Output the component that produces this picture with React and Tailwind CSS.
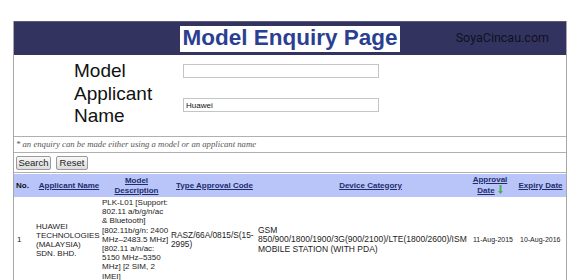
import React from 'react';

const cols = [22, 66, 69, 87, 211, 46, 51];

function SortArrow() {
  return (
    <svg width="5" height="9" viewBox="0 0 5 9" className="inline-block ml-[3px] align-[-1px]">
      <path d="M1.5 0h2v6h1.5L2.5 9 0 6h1.5z" fill="#4caf50" />
    </svg>
  );
}

function HeadLink({ children }) {
  return <span className="underline text-[#1f2d6d]">{children}</span>;
}

export default function App() {
  return (
    <div className="w-[580px] h-[280px] overflow-hidden bg-white text-[#111] font-['Liberation_Sans',Arial,sans-serif]">
      <div className="ml-[13px] mt-[21px] w-[554px] border-x border-[#a8a8a8]">
        <header className="h-[34px] bg-[#33335f] flex items-center border-t border-[#5a5a7a]">
          <div className="ml-[166px] w-[220px] h-[26px] bg-white flex items-center justify-center text-[22.5px] font-bold leading-none text-[#2b3f92]">
            Model Enquiry Page
          </div>
          <span className="ml-auto mr-[17px] text-[12.5px] font-['Roboto',sans-serif] text-black/70">SoyaCincau.com</span>
        </header>

        <div className="pt-[5px] pb-[9px] border-b border-[#b0b0b0] flex flex-col gap-[1px]">
          <div className="flex items-center">
            <div className="w-[169px] pl-[60px] text-[19px] leading-[22px]">Model</div>
            <input
              className="w-[196px] h-[14px] border border-[#c4c4c4] bg-white px-[2px] text-[8px] outline-none"
              defaultValue=""
            />
          </div>
          <div className="flex items-center">
            <div className="w-[169px] pl-[60px] text-[19px] leading-[22px]">
              Applicant
              <br />
              Name
            </div>
            <input
              className="w-[196px] h-[14px] border border-[#c4c4c4] bg-white px-[2px] text-[8px] outline-none"
              defaultValue="Huawei"
            />
          </div>
        </div>

        <div className="h-[16px] border-b border-[#b0b0b0] flex items-center pl-[2px] text-[8.7px] italic text-[#555] font-['Liberation_Serif',serif]">
          * an enquiry can be made either using a model or an applicant name
        </div>

        <div className="h-[20px] border-b border-[#b0b0b0] flex items-center gap-[5px] pl-[2px]">
          <button className="w-[35px] h-[14px] border border-[#9a9a9a] rounded-[2px] bg-gradient-to-b from-[#f8f8f8] to-[#dcdcdc] text-[9.5px] leading-none text-[#222]">
            Search
          </button>
          <button className="w-[32px] h-[14px] border border-[#9a9a9a] rounded-[2px] bg-gradient-to-b from-[#f8f8f8] to-[#dcdcdc] text-[9.5px] leading-none text-[#222]">
            Reset
          </button>
        </div>

        <table className="mt-[1px] w-full table-fixed border-collapse text-[8px]">
          <colgroup>
            {cols.map((w, i) => (
              <col key={i} style={{ width: w }} />
            ))}
          </colgroup>
          <thead>
            <tr className="h-[23px] bg-[#b9c4f9] font-bold leading-[10px] align-middle">
              <th className="text-left pl-[2px]">No.</th>
              <th className="text-center"><HeadLink>Applicant Name</HeadLink></th>
              <th className="text-center"><HeadLink>Model<br />Description</HeadLink></th>
              <th className="text-center"><HeadLink>Type Approval Code</HeadLink></th>
              <th className="text-center pl-[14px]"><HeadLink>Device Category</HeadLink></th>
              <th className="text-center pr-[4px]">
                <HeadLink>Approval</HeadLink>
                <br />
                <HeadLink>Date</HeadLink>
                <SortArrow />
              </th>
              <th className="text-center whitespace-nowrap"><HeadLink>Expiry Date</HeadLink></th>
            </tr>
          </thead>
          <tbody>
            <tr className="align-middle leading-[9.2px] text-[#222] border-b border-[#b0b0b0]">
              <td className="pl-[3px]">1</td>
              <td className="whitespace-nowrap">
                HUAWEI<br />TECHNOLOGIES<br />(MALAYSIA)<br />SDN. BHD.
              </td>
              <td className="pt-[1px] pb-[2px] whitespace-nowrap">
                PLK-L01 [Support:<br />
                802.11 a/b/g/n/ac<br />
                &amp; Bluetooth]<br />
                [802.11b/g/n: 2400<br />
                MHz–2483.5 MHz]<br />
                [802.11 a/n/ac:<br />
                5150 MHz–5350<br />
                MHz] [2 SIM, 2<br />
                IMEI]
              </td>
              <td className="whitespace-nowrap text-[8.3px]">
                RASZ/66A/0815/S(15-<br />2995)
              </td>
              <td className="whitespace-nowrap text-[8.5px]">
                GSM<br />850/900/1800/1900/3G(900/2100)/LTE(1800/2600)/ISM<br />MOBILE STATION (WITH PDA)
              </td>
              <td className="whitespace-nowrap pl-[4px] text-[7px]">11-Aug-2015</td>
              <td className="whitespace-nowrap pl-[5px] text-[7px]">10-Aug-2016</td>
            </tr>
          </tbody>
        </table>
      </div>
    </div>
  );
}
